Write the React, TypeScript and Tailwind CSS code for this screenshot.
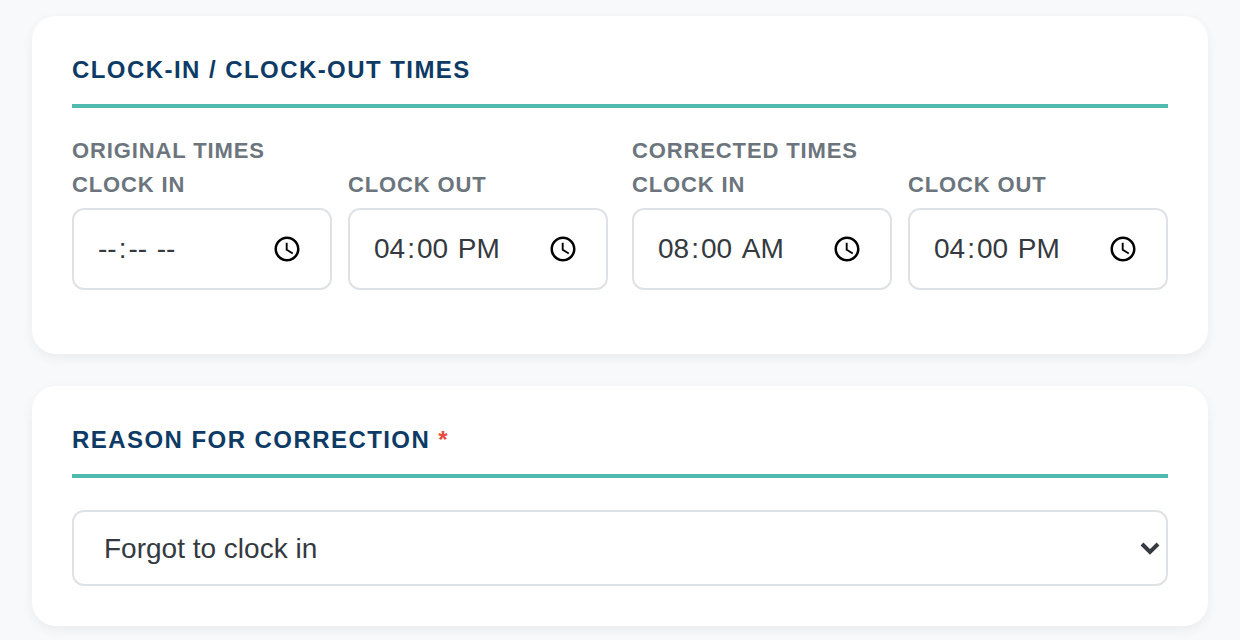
const stack = "font-['Liberation_Sans',Arial,sans-serif]";

function TimeField({ label, value }: { label: string; value: string }) {
  return (
    <div className="w-[260px] flex flex-col">
      <label className="h-[32px] text-[22px] leading-[32px] font-bold tracking-[0.88px] text-[#6c757d] whitespace-nowrap">{label}</label>
      <input
        type="time"
        defaultValue={value}
        className="mt-[7px] h-[82px] w-full border-2 border-[#dee2e6] rounded-[12px] bg-white pl-[24px] pr-[25.5px] text-[28px] text-[#343a40] -indent-px [&::-webkit-datetime-edit-text]:px-[1px]"
      />
    </div>
  );
}

function Group({ title, first, second }: { title: string; first: string; second: string }) {
  return (
    <div className="w-[536px]">
      <div className="h-[32px] text-[22px] leading-[32px] font-bold tracking-[0.88px] text-[#6c757d]">{title}</div>
      <div className="mt-[2px] flex gap-[16px]">
        <TimeField label="CLOCK IN" value={first} />
        <TimeField label="CLOCK OUT" value={second} />
      </div>
    </div>
  );
}

export default function App() {
  return (
    <div className={"w-[1240px] h-[640px] overflow-hidden bg-[#f8f9fa] px-[32px] pt-[16px] " + stack}>
      <section className="h-[338px] bg-white rounded-[24px] shadow-[0_4px_12px_rgba(0,0,0,0.06)] px-[40px] pt-[36px]">
        <h2 className="h-[56px] border-b-4 border-[#4fbbb0] text-[24px] leading-[36px] font-bold tracking-[1.44px] text-[#0d3b66]">CLOCK-IN / CLOCK-OUT TIMES</h2>
        <div className="mt-[27px] flex gap-[24px]">
          <Group title="ORIGINAL TIMES" first="" second="16:00" />
          <Group title="CORRECTED TIMES" first="08:00" second="16:00" />
        </div>
      </section>
      <section className="mt-[32px] h-[240px] bg-white rounded-[24px] shadow-[0_4px_12px_rgba(0,0,0,0.06)] px-[40px] pt-[36px]">
        <h2 className="h-[56px] border-b-4 border-[#4fbbb0] text-[24px] leading-[36px] font-bold tracking-[1.44px] text-[#0d3b66]">
          REASON FOR CORRECTION <span className="text-[#e74c3c]">*</span>
        </h2>
        <div className="relative mt-[32px]">
          <select
            defaultValue="forgot"
            className="appearance-none block h-[76px] w-full border-2 border-[#dee2e6] rounded-[12px] bg-white pl-[30px] pr-[30px] pt-[2px] text-[28px] text-[#343a40]"
          >
            <option value="forgot">Forgot to clock in</option>
          </select>
          <svg viewBox="0 0 24 24" width="24" height="24" fill="none" stroke="#343a40" strokeWidth="4" className="absolute right-[6px] top-[26px] pointer-events-none">
            <path d="M4 8l8 8 8-8" />
          </svg>
        </div>
      </section>
    </div>
  );
}
